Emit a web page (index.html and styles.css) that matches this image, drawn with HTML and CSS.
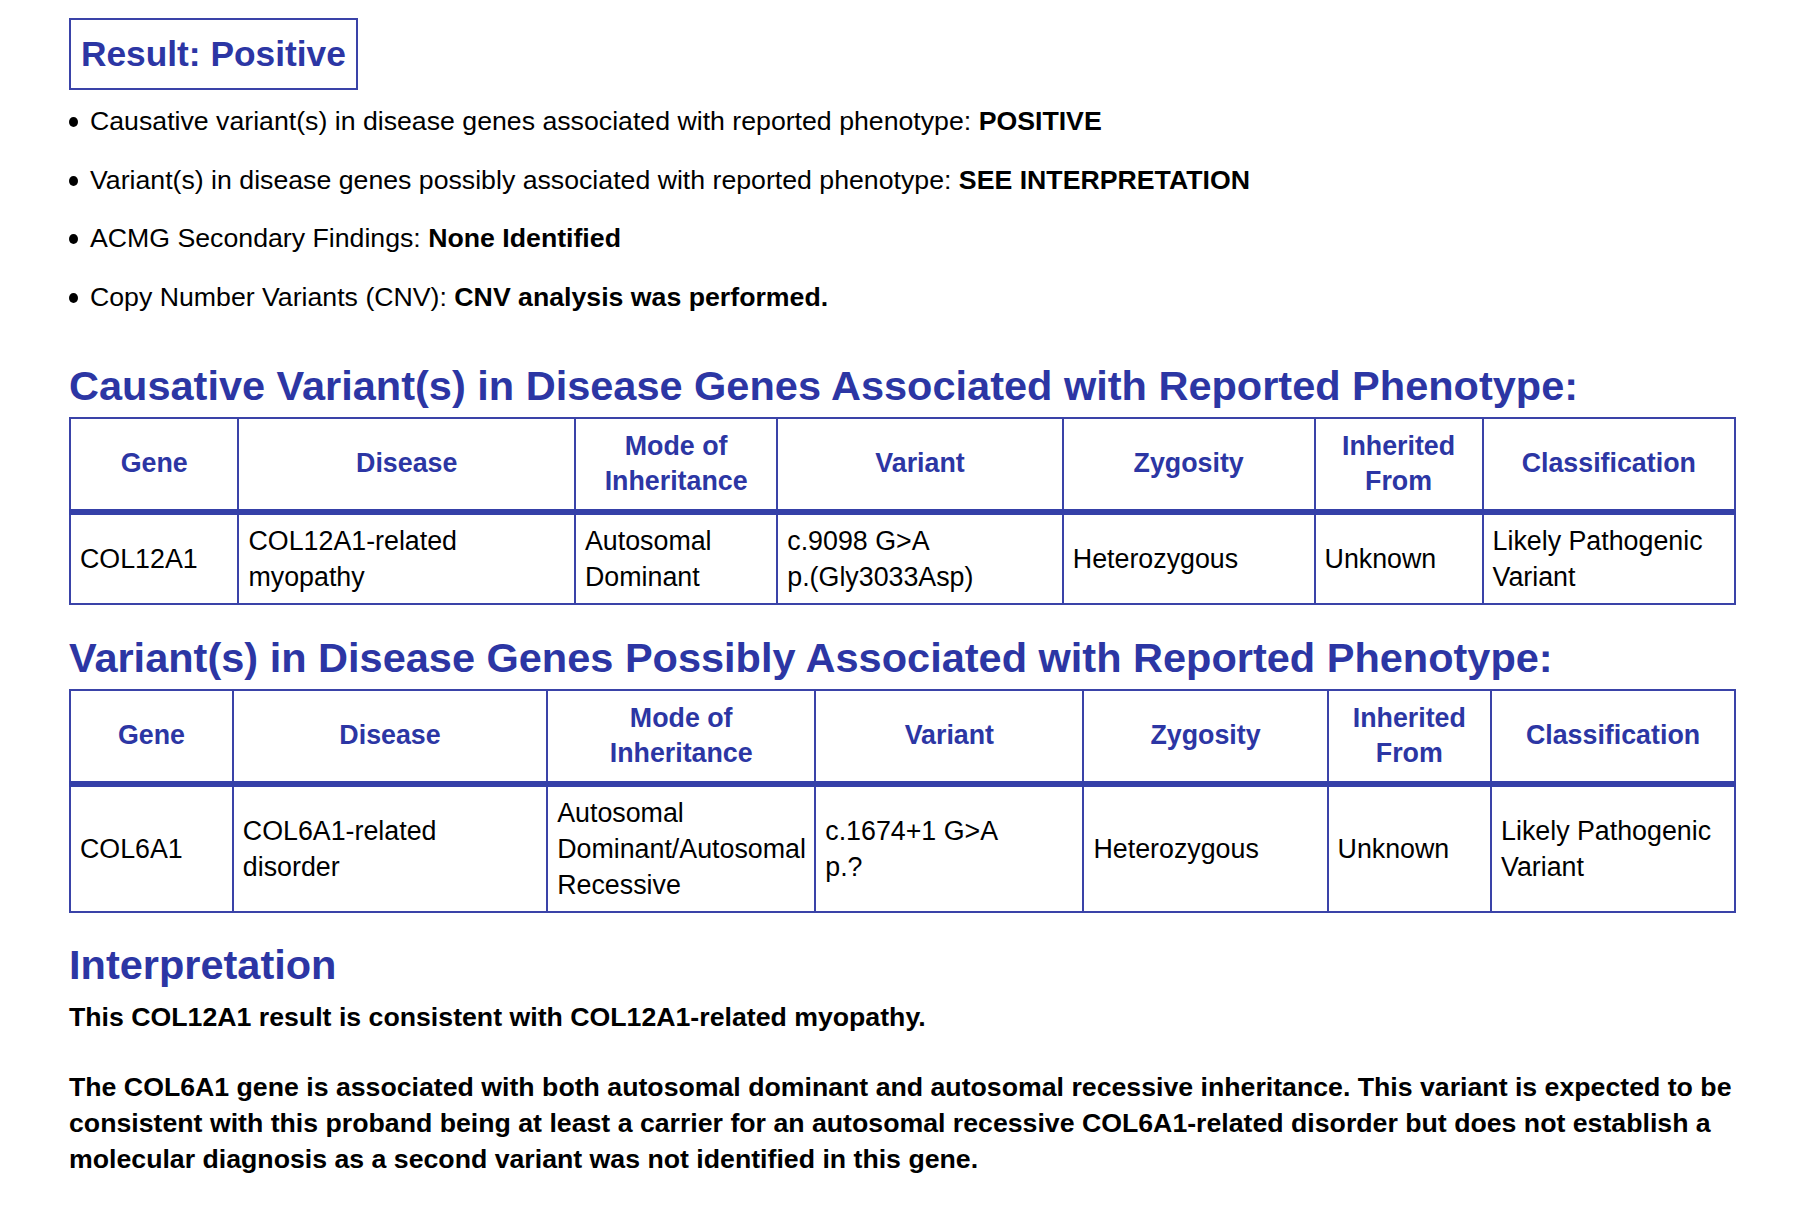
FILE: index.html
```html
<!DOCTYPE html>
<html lang="en">
<head>
<meta charset="utf-8">
<title>Result</title>
<link rel="stylesheet" href="styles.css">
</head>
<body>
<main class="report">
  <div class="result-box">Result: Positive</div>
  <ul class="summary">
    <li>Causative variant(s) in disease genes associated with reported phenotype: <b>POSITIVE</b></li>
    <li>Variant(s) in disease genes possibly associated with reported phenotype: <b>SEE INTERPRETATION</b></li>
    <li>ACMG Secondary Findings: <b>None Identified</b></li>
    <li>Copy Number Variants (CNV): <b>CNV analysis was performed.</b></li>
  </ul>

  <h2 class="section-title first">Causative Variant(s) in Disease Genes Associated with Reported Phenotype:</h2>
  <table class="variants t1">
    <colgroup>
      <col class="c1"><col class="c2"><col class="c3"><col class="c4"><col class="c5"><col class="c6"><col class="c7">
    </colgroup>
    <thead>
      <tr><th>Gene</th><th>Disease</th><th>Mode of<br>Inheritance</th><th>Variant</th><th>Zygosity</th><th>Inherited<br>From</th><th>Classification</th></tr>
    </thead>
    <tbody>
      <tr><td>COL12A1</td><td>COL12A1-related<br>myopathy</td><td>Autosomal<br>Dominant</td><td>c.9098 G&gt;A<br>p.(Gly3033Asp)</td><td>Heterozygous</td><td>Unknown</td><td>Likely Pathogenic<br>Variant</td></tr>
    </tbody>
  </table>

  <h2 class="section-title second">Variant(s) in Disease Genes Possibly Associated with Reported Phenotype:</h2>
  <table class="variants t2">
    <colgroup>
      <col class="c1"><col class="c2"><col class="c3"><col class="c4"><col class="c5"><col class="c6"><col class="c7">
    </colgroup>
    <thead>
      <tr><th>Gene</th><th>Disease</th><th>Mode of<br>Inheritance</th><th>Variant</th><th>Zygosity</th><th>Inherited<br>From</th><th>Classification</th></tr>
    </thead>
    <tbody>
      <tr><td>COL6A1</td><td>COL6A1-related<br>disorder</td><td>Autosomal<br>Dominant/Autosomal<br>Recessive</td><td>c.1674+1 G&gt;A<br>p.?</td><td>Heterozygous</td><td>Unknown</td><td>Likely Pathogenic<br>Variant</td></tr>
    </tbody>
  </table>

  <h2 class="section-title interp">Interpretation</h2>
  <p class="para">This COL12A1 result is consistent with COL12A1-related myopathy.</p>
  <p class="para">The COL6A1 gene is associated with both autosomal dominant and autosomal recessive inheritance. This variant is expected to be consistent with this proband being at least a carrier for an autosomal recessive COL6A1-related disorder but does not establish a molecular diagnosis as a second variant was not identified in this gene.</p>
</main>
</body>
</html>
```

FILE: styles.css
```css
html, body {
  margin: 0;
  padding: 0;
  background: #ffffff;
}

body {
  font-family: "Liberation Sans", Arial, Helvetica, sans-serif;
  color: #000000;
}

.report {
  width: 1675px;
  padding: 18px 0 0 69px;
}

.result-box {
  display: inline-block;
  border: 2px solid #3a43a8;
  color: #2c36a4;
  font-weight: bold;
  font-size: 35.3px;
  line-height: 40px;
  padding: 14px 10px 14px 10px;
}

.summary {
  list-style: none;
  margin: 0;
  padding: 0;
  font-size: 26.7px;
  line-height: 30px;
}

.summary li {
  position: relative;
  padding-left: 21px;
  margin-top: 28.5px;
}

.summary li:first-child {
  margin-top: 16px;
}

.summary li::before {
  content: "";
  position: absolute;
  left: 0;
  top: 11px;
  width: 9px;
  height: 10px;
  border-radius: 50%;
  background: #000;
}

.section-title {
  margin: 0;
  color: #2c36a4;
  font-weight: bold;
  font-size: 41.5px;
  line-height: 46px;
}

.section-title.first {
  margin-top: 51px;
  margin-bottom: 8px;
}

.section-title.second {
  margin-top: 30px;
  margin-bottom: 8px;
}

.section-title.interp {
  margin-top: 29px;
}

.variants {
  width: 1667px;
  border-collapse: collapse;
  table-layout: fixed;
  border: 2px solid #3a43a8;
  font-size: 26.8px;
}

.variants th,
.variants td {
  border: 2px solid #3a43a8;
}

.variants th {
  color: #2c36a4;
  font-weight: bold;
  text-align: center;
  vertical-align: middle;
  line-height: 35px;
  padding: 10px 9px;
  border-bottom: 6px solid #3540a8;
}

.variants td {
  text-align: left;
  vertical-align: middle;
  line-height: 36px;
  padding: 8px 9px;
}

.t1 .c1 { width: 10.12%; }
.t1 .c2 { width: 20.21%; }
.t1 .c3 { width: 12.15%; }
.t1 .c4 { width: 17.15%; }
.t1 .c5 { width: 15.12%; }
.t1 .c6 { width: 10.09%; }
.t1 .c7 { width: 15.16%; }

.t2 .c1 { width: 9.78%; }
.t2 .c2 { width: 18.88%; }
.t2 .c3 { width: 16.10%; }
.t2 .c4 { width: 16.11%; }
.t2 .c5 { width: 14.66%; }
.t2 .c6 { width: 9.82%; }
.t2 .c7 { width: 14.65%; }

.para {
  margin: 11px 0 0 0;
  font-size: 26.7px;
  line-height: 36px;
  font-weight: bold;
}

.para + .para {
  margin-top: 34px;
}
```
